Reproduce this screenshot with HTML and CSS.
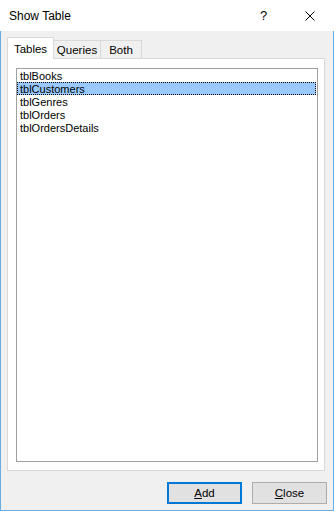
FILE: index.html
```html
<!DOCTYPE html>
<html lang="en">
  <head>
    <meta charset="UTF-8" />
    <title>Show Table</title>
    <link rel="stylesheet" href="styles.css">
  </head>
  <body>
    <!-- the dialog window -->
    <div class="dialog">
      <!-- title bar with help and close -->
      <div class="titlebar">
        <span class="title">Show Table</span>
        <span class="help">?</span>
        <span class="close-x">
          <svg width="10" height="10" viewBox="0 0 10 10">
            <path d="M0.5 0.5 L9.5 9.5 M9.5 0.5 L0.5 9.5" stroke="#000" stroke-width="1" fill="none" />
          </svg>
        </span>
      </div>
      <!-- dialog body -->
      <div class="content">
        <!-- the tabs -->
        <div class="tabs">
          <div class="tab active tab-tables">Tables</div>
          <div class="tab tab-queries">Queries</div>
          <div class="tab tab-both">Both</div>
        </div>
        <!-- tab page -->
        <div class="panel">
          <ul class="listbox">
            <li>tblBooks</li>
            <li class="selected">tblCustomers</li>
            <li>tblGenres</li>
            <li>tblOrders</li>
            <li>tblOrdersDetails</li>
          </ul>
        </div>
        <!-- the bottom buttons -->
        <div class="buttons">
          <button class="btn default"><u>A</u>dd</button>
          <button class="btn"><u>C</u>lose</button>
        </div>
      </div>
    </div>
  </body>
</html>
```

FILE: styles.css
```css
/* reset */
* {
  margin: 0;
  padding: 0;
  box-sizing: border-box;
}
body {
  background-color: #ffffff;
  font-family: "Liberation Sans", Arial, sans-serif;
  color: #000000;
}
/* window frame */
.dialog {
  width: 334px;
  height: 511px;
  display: flex;
  flex-direction: column;
}
/* title bar */
.titlebar {
  height: 31px;
  background-color: #ffffff;
  display: flex;
  align-items: center;
  padding-left: 9px;
  font-size: 12px;
}
.title {
  flex: 1;
}
.help {
  width: 14px;
  margin-right: 31px;
  font-size: 13px;
}
.close-x {
  display: flex;
  width: 10px;
  height: 10px;
  margin-right: 19px;
}
/* body of the dialog */
.content {
  flex: 1;
  background-color: #f0f0f0;
  border: 1px solid #67ade6;
  border-top: none;
  padding: 6px 8px 0 6px;
  display: flex;
  flex-direction: column;
}
/* tab strip */
.tabs {
  display: flex;
  align-items: flex-end;
  height: 21px;
  font-size: 11.5px;
}
.tab {
  height: 18px;
  border: 1px solid #d9d9d9;
  border-bottom: none;
  background-color: #f0f0f0;
  margin-right: -1px;
  display: flex;
  align-items: center;
  justify-content: center;
  padding-top: 1px;
}
.tab.active {
  height: 22px;
  margin-bottom: -1px;
  background-color: #ffffff;
  position: relative;
  z-index: 1;
}
.tab-tables {
  width: 47px;
}
.tab-queries {
  width: 48px;
}
.tab-both {
  width: 42px;
}
/* tab page */
.panel {
  height: 413px;
  background-color: #ffffff;
  border: 1px solid #d9d9d9;
  padding: 9px 6px 0 8px;
}
/* list of tables */
.listbox {
  list-style: none;
  height: 394px;
  border: 1px solid #a0a0a0;
  font-size: 11px;
  line-height: 13px;
}
.listbox li {
  height: 13px;
  padding-left: 3px;
  padding-top: 1px;
  white-space: nowrap;
}
.listbox li.selected {
  background-color: #99c9ff;
  outline: 1px dotted #000000;
  outline-offset: -1px;
  margin-right: 1px;
}
/* buttons */
.buttons {
  display: flex;
  justify-content: flex-end;
  gap: 10px;
  margin-top: 11px;
  margin-right: -2px;
}
.btn {
  width: 75px;
  height: 22px;
  background-color: #e1e1e1;
  border: 1px solid #adadad;
  font-family: "Liberation Sans", Arial, sans-serif;
  font-size: 11.5px;
  color: #000000;
}
.btn.default {
  border: 2px solid #0078d7;
}
```
